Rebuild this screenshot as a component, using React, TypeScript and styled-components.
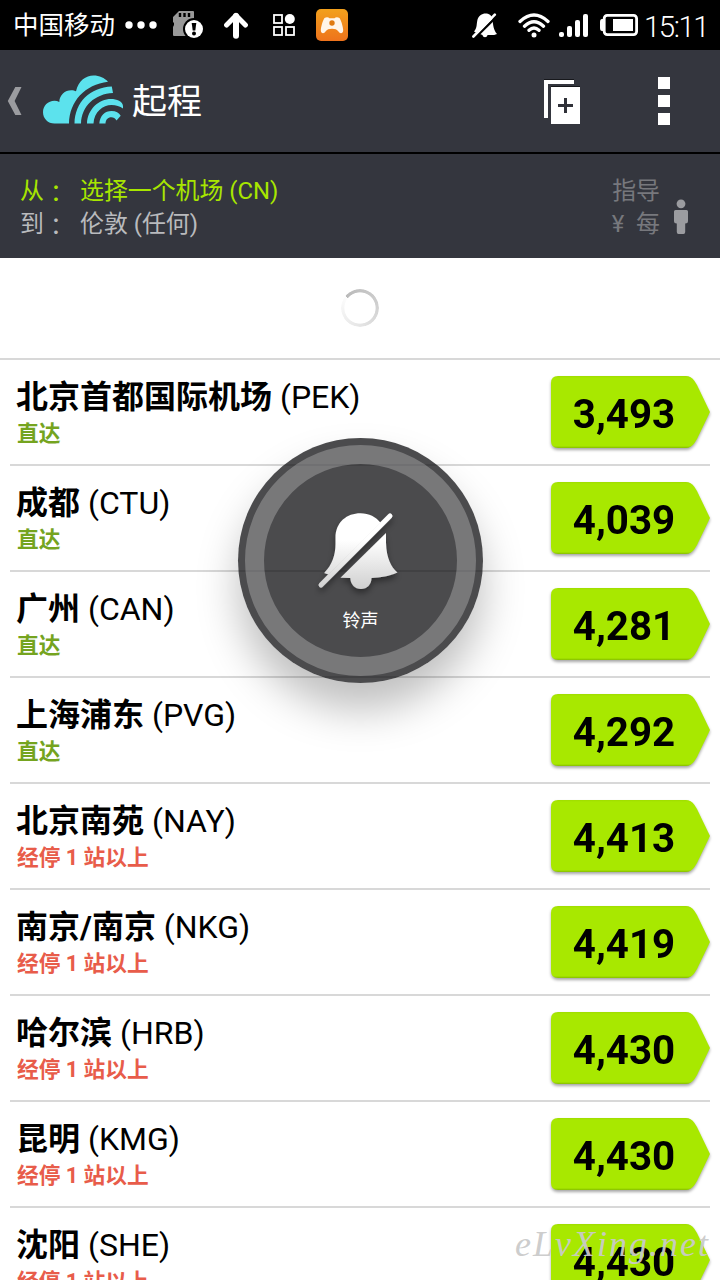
import React from 'react';
import styled, { createGlobalStyle } from 'styled-components';

const GlobalStyle = createGlobalStyle`
  * { box-sizing: border-box; }
  html, body { margin: 0; padding: 0; background: #fff; }
  body { font-family: Roboto, 'Noto Sans CJK SC', sans-serif; overflow: hidden; }
  svg { display: block; flex: none; }
`;

const Screen = styled.div`
  position: relative;
  width: 720px;
  height: 1280px;
  overflow: hidden;
  display: flex;
  flex-direction: column;
  background: #fff;
`;

const StatusBar = styled.header`
  flex: none;
  height: 50px;
  background: #000;
  color: #fff;
  display: flex;
  align-items: center;
  padding: 0 12px 0 13px;
`;

const Carrier = styled.span`
  font-size: 25.5px;
  line-height: 50px;
  width: 110px;
  white-space: nowrap;
`;

const StatusIcon = styled.span<{ $gap: number }>`
  margin-left: ${(p) => p.$gap}px;
`;

const Spacer = styled.div`
  flex: 1;
`;

const Clock = styled.span`
  font-size: 29.5px;
  font-weight: 300;
  line-height: 46px;
  width: 64px;
  margin-left: 6px;
  padding-top: 4px;
  letter-spacing: -1.5px;
  white-space: nowrap;
`;

const ActionBar = styled.nav`
  flex: none;
  height: 104px;
  background: #34363e;
  border-bottom: 2px solid #000;
  display: flex;
  align-items: center;
  padding: 0 50px 0 7px;
`;

const Logo = styled.div`
  margin: 0 0 4px 21px;
`;

const Title = styled.h1`
  margin: 4px 0 0 8px;
  color: #fff;
  font-size: 35px;
  font-weight: 400;
  line-height: 50px;
`;

const MenuButton = styled.div`
  display: flex;
  flex-direction: column;
  gap: 6px;
  margin-left: 78px;
`;

const MenuDot = styled.i`
  width: 12px;
  height: 12px;
  background: #fff;
`;

const Summary = styled.section`
  flex: none;
  height: 104px;
  background: #34363e;
  display: flex;
  padding: 21px 31px 0 20px;
  font-size: 23.9px;
  line-height: 33px;
`;

const Route = styled.div`
  flex: 1;
`;

const RouteLine = styled.div<{ $active?: boolean }>`
  display: flex;
  height: 33px;
  color: ${(p) => (p.$active ? '#a8e600' : '#b9babd')};
`;

const RouteLabel = styled.span`
  display: flex;
  width: 60px;
  white-space: nowrap;
`;

const Colon = styled.span`
  font-family: 'Noto Sans CJK TC', sans-serif;
`;

const PriceNote = styled.div`
  color: #77787d;
  text-align: right;
  margin-right: 13px;
`;

const Person = styled.div`
  padding-top: 24px;
`;

const Loading = styled.div`
  flex: none;
  height: 102px;
  border-bottom: 2px solid #d8d8d8;
  display: flex;
  align-items: center;
  justify-content: center;
`;

const Spinner = styled.div`
  width: 38px;
  height: 38px;
  border-radius: 50%;
  background: conic-gradient(from -50deg, #bababa, #cfcfcf 35%, #e6e6e6 65%, #fdfdfd);
  mask: radial-gradient(circle, transparent 15.2px, #000 16px);
`;

const List = styled.ul`
  list-style: none;
  margin: 0;
  padding: 0 10px;
`;

const Row = styled.li`
  height: 106px;
  border-bottom: 2px solid #d8d8d8;
  display: flex;
  justify-content: space-between;
  padding: 16px 0 0 6px;
`;

const Place = styled.div`
  padding-top: 1px;
`;

const Airport = styled.div`
  font-size: 32px;
  line-height: 40px;
  color: #000;
  white-space: nowrap;
`;

const City = styled.b`
  font-weight: 700;
`;

const Stops = styled.div<{ $direct: boolean }>`
  padding: 1px 0 0 1px;
  font-size: 21.7px;
  font-weight: 700;
  line-height: 32px;
  color: ${(p) => (p.$direct ? '#75a41f' : '#e85c4a')};
`;

const PriceTag = styled.div`
  position: relative;
  width: 159px;
  height: 72px;
  padding-right: 13px;
  text-align: center;
  font-size: 40.3px;
  font-weight: 700;
  line-height: 78px;
  color: #000;
  filter: drop-shadow(0 2px 1.5px rgba(0, 0, 0, 0.35));

  &::before {
    content: '';
    position: absolute;
    inset: 0;
    z-index: -1;
    background: linear-gradient(#9fdc00, #a8e800 2px, #a8e800 70px, #85bd00);
    clip-path: path('M7 0H135Q140 0 143.5 5L146 9L159 36L146 63L143.5 67Q140 72 135 72H7Q0 72 0 65V7Q0 0 7 0Z');
  }
`;

const Toast = styled.div`
  position: absolute;
  left: 238px;
  top: 438px;
  width: 245px;
  height: 245px;
  border-radius: 50%;
  background: rgba(15, 15, 17, 0.75);
  box-shadow: 0 27px 42px rgba(0, 0, 0, 0.25);
  display: flex;
  padding: 7px;
`;

const Ring = styled.div`
  flex: 1;
  border-radius: 50%;
  border: 19px solid rgba(255, 255, 255, 0.25);
  display: flex;
  flex-direction: column;
  align-items: center;
  padding-top: 44px;
  color: #fff;
  font-size: 18px;
  line-height: 24px;
`;

const ToastLabel = styled.span`
  margin-top: 7px;
`;

const Watermark = styled.div`
  position: absolute;
  left: 515px;
  top: 1222px;
  font-family: 'Liberation Serif', serif;
  font-style: italic;
  font-size: 36px;
  line-height: 44px;
  letter-spacing: 2px;
  color: rgba(202, 202, 202, 0.95);
  white-space: nowrap;
`;

const airports = [
  { city: '北京首都国际机场', code: 'PEK', direct: true, price: '3,493' },
  { city: '成都', code: 'CTU', direct: true, price: '4,039' },
  { city: '广州', code: 'CAN', direct: true, price: '4,281' },
  { city: '上海浦东', code: 'PVG', direct: true, price: '4,292' },
  { city: '北京南苑', code: 'NAY', direct: false, price: '4,413' },
  { city: '南京/南京', code: 'NKG', direct: false, price: '4,419' },
  { city: '哈尔滨', code: 'HRB', direct: false, price: '4,430' },
  { city: '昆明', code: 'KMG', direct: false, price: '4,430' },
  { city: '沈阳', code: 'SHE', direct: false, price: '4,430' },
];

const DotsIcon = () => (
  <svg width="32" height="8" viewBox="0 0 32 8" fill="#fff">
    <circle cx="4" cy="4" r="3.7" />
    <circle cx="16" cy="4" r="3.7" />
    <circle cx="28" cy="4" r="3.7" />
  </svg>
);

const SdCardIcon = () => (
  <svg width="31" height="28" viewBox="0 0 31 28">
    <path d="M6 0H20Q21 0 21 1V25H1Q0 25 0 24V16L1 14V12L0 11V6Z" fill="#999" />
    <path d="M7 2V6M11.5 2V6M16 2V6" stroke="#000" strokeWidth="2.4" />
    <circle cx="21" cy="18" r="11" fill="#000" />
    <circle cx="21" cy="18" r="9" fill="#fff" />
    <path d="M18.7 12H23.3L22.3 19.5H19.7Z" fill="#000" />
    <circle cx="21" cy="22.5" r="2" fill="#000" />
  </svg>
);

const UpArrowIcon = () => (
  <svg width="24" height="27" viewBox="0 0 24 27" fill="none" stroke="#fff" strokeLinecap="round" strokeLinejoin="round">
    <path d="M12 4V23.7" strokeWidth="6" />
    <path d="M2.6 13L12 3.4L21.4 13" strokeWidth="5" />
  </svg>
);

const AppsIcon = () => (
  <svg width="22" height="22" viewBox="0 0 22 22" fill="none" stroke="#fff" strokeWidth="1.8">
    <rect x="1" y="1" width="8" height="8" />
    <rect x="1" y="13" width="8" height="8" />
    <rect x="13" y="13" width="8" height="8" />
    <circle cx="16.8" cy="5" r="5" fill="#fff" stroke="none" />
  </svg>
);

const GameIcon = () => (
  <svg width="32" height="32" viewBox="0 0 32 32">
    <defs>
      <linearGradient id="game" x1="0" y1="0" x2="0" y2="1">
        <stop offset="0" stopColor="#f2a01c" />
        <stop offset="1" stopColor="#ee731c" />
      </linearGradient>
    </defs>
    <rect width="32" height="32" rx="5" fill="url(#game)" />
    <path d="M8.5 9C10.5 7.8 12.5 8.2 13.5 9.2H18.5C19.5 8.2 21.5 7.8 23.5 9C25.5 12 27 18 27.2 21C27.2 24.8 24 25 22.5 22.6C21 20.4 19 19.8 16 19.8S11 20.4 9.5 22.6C8 25 4.8 24.8 4.8 21C5 18 6.5 12 8.5 9Z" fill="#fff5ea" />
    <circle cx="16" cy="14" r="2.7" fill="#df7a12" />
  </svg>
);

const MutedIcon = () => (
  <svg width="26" height="25" viewBox="0 0 26 25">
    <path d="M2 18.5C5 15 4.5 12 5.2 8C6.2 2.5 10 .5 13.5 .5C17 .5 19.5 2 20.5 6C21 12 21.5 17 25 21C22 22.5 18 22 15.5 22C15 25 11 25 10.5 22L3 19Z" fill="#fff" />
    <path d="M3 25L25.5 2.5" stroke="#000" strokeWidth="2.4" />
    <path d="M1.4 23.5L22.8 1.7" stroke="#fff" strokeWidth="2.6" strokeLinecap="round" />
  </svg>
);

const WifiIcon = () => (
  <svg width="32" height="25" viewBox="0 0 32 25" fill="none" stroke="#fff" strokeWidth="3.3" strokeLinecap="round">
    <path d="M2 8.5Q16-4.5 30 8.5M6.5 13.2Q16 4.2 25.5 13.2M11 17.3Q16 12.8 21 17.3" />
    <circle cx="16" cy="22" r="2.5" fill="#fff" stroke="none" />
  </svg>
);

const SignalIcon = () => (
  <svg width="29" height="23" viewBox="0 0 29 23" fill="#fff">
    <rect x="0" y="18" width="5" height="5" rx="2" />
    <rect x="8" y="12" width="5" height="11" rx="2" />
    <rect x="16" y="6" width="5" height="17" rx="2" />
    <rect x="24" y="0" width="5" height="23" rx="2" />
  </svg>
);

const BatteryIcon = () => (
  <svg width="38" height="22" viewBox="0 0 38 22">
    <rect x="4.2" y="1.4" width="32.4" height="19.2" rx="3" fill="none" stroke="#fff" strokeWidth="2.8" />
    <path d="M4 5H2Q0 5 0 8V14Q0 17 2 17H4Z" fill="#fff" />
    <rect x="13" y="5" width="20" height="12" fill="#fff" />
  </svg>
);

const BackIcon = () => (
  <svg width="15" height="28" viewBox="0 0 15 28">
    <path d="M8.3 0H14.5L7.6 14L14.5 28H8.3L.8 14Z" fill="#9b9ca0" />
  </svg>
);

const CloudIcon = () => (
  <svg width="81" height="49" viewBox="0 0 81 49">
    <path d="M26 48.5H11.5C5 48.5 0 43.5 0 37.2S5 25.8 11.5 25.8C13.2 25.8 14.8 26.2 16.3 26.9C16.5 20 22 15.3 28.2 15.3C30.2 15.3 31.8 15.8 33 16.3C35.5 5.5 43 .5 50.5 .5C56.5 .5 61.5 3 65 6.7C42 9.5 26.5 26 26 48.5Z" fill="#5ce2ed" />
    <path d="M31.5 48.5C32 27 47 12.5 68.8 11.5L70 18C52 18.8 38.5 31 38 48.5Z" fill="#5ce2ed" />
    <path d="M44 48.5C44.5 34 56 24 68 24C73.5 24 80 26.5 80 31V33.5C77 31.5 73 30 68.5 30C60 30 51 37 50.5 48.5Z" fill="#5ce2ed" />
    <path d="M56.3 48.5C57 40.5 62 36 68.5 36C73 36 76 38 77.7 40.7L73.5 45.5C72.2 43.2 70.5 42.2 68.3 42.2C65 42.2 62.6 44.5 62.5 48.5Z" fill="#5ce2ed" />
  </svg>
);

const AddPageIcon = () => (
  <svg width="36" height="45" viewBox="0 0 36 45">
    <path d="M0 0H30V5H4V39H0Z" fill="#fff" />
    <path d="M0 .5H30M7 7.5H36" stroke="#17181c" />
    <rect x="7" y="8" width="29" height="37" fill="#fff" />
    <path d="M14 26.5H29M21.5 19V34" stroke="#303139" strokeWidth="3" />
  </svg>
);

const PersonIcon = () => (
  <svg width="16" height="36" viewBox="0 0 16 36" fill="#9b9ca0">
    <circle cx="8" cy="4.8" r="4.4" />
    <path d="M2.5 11H13.5Q15 11 15 12.5V22Q15 24.5 12.2 24.5V33Q12.2 35 10.5 35H5.5Q3.8 35 3.8 33V24.5Q1 24.5 1 22V12.5Q1 11 2.5 11Z" />
  </svg>
);

const MutedBellIcon = () => (
  <svg width="94" height="94" viewBox="0 0 94 94">
    <defs>
      <linearGradient id="bell" gradientUnits="userSpaceOnUse" x1="0" y1="5" x2="0" y2="82">
        <stop offset="0" stopColor="#fff" />
        <stop offset=".35" stopColor="#fff" />
        <stop offset="1" stopColor="#cfcfcf" />
      </linearGradient>
      <filter id="bellShadow" x="-20%" y="-20%" width="140%" height="150%">
        <feDropShadow dx="0" dy="4" stdDeviation="3" floodColor="#000" floodOpacity=".4" />
      </filter>
    </defs>
    <g fill="url(#bell)" filter="url(#bellShadow)">
      <path d="M10.5 64.5C18 57 21.5 47 21.5 36V30C21.5 14 33 5.3 46.5 5.3C55 5.3 62 9 66.5 14.8L14.5 66.6L10.5 65.2Z" />
      <path d="M72 25V35C72.5 50 77 59 83.5 64.5C76 68 66 69.5 57.5 70C57.5 76.5 53 81 47 81S36.5 76.5 36.3 70L26.5 69.7Z" />
      <path d="M76 8L7 77" stroke="url(#bell)" strokeWidth="5" strokeLinecap="round" />
    </g>
  </svg>
);

export default function App() {
  return (
    <Screen>
      <GlobalStyle />
      <StatusBar>
        <Carrier>中国移动</Carrier>
        <StatusIcon $gap={2}><DotsIcon /></StatusIcon>
        <StatusIcon $gap={16}><SdCardIcon /></StatusIcon>
        <StatusIcon $gap={20}><UpArrowIcon /></StatusIcon>
        <StatusIcon $gap={25}><AppsIcon /></StatusIcon>
        <StatusIcon $gap={21}><GameIcon /></StatusIcon>
        <Spacer />
        <StatusIcon $gap={0}><MutedIcon /></StatusIcon>
        <StatusIcon $gap={20}><WifiIcon /></StatusIcon>
        <StatusIcon $gap={9}><SignalIcon /></StatusIcon>
        <StatusIcon $gap={12}><BatteryIcon /></StatusIcon>
        <Clock>15:11</Clock>
      </StatusBar>
      <ActionBar>
        <BackIcon />
        <Logo><CloudIcon /></Logo>
        <Title>起程</Title>
        <Spacer />
        <AddPageIcon />
        <MenuButton>
          <MenuDot />
          <MenuDot />
          <MenuDot />
        </MenuButton>
      </ActionBar>
      <Summary>
        <Route>
          <RouteLine $active><RouteLabel>从<Colon>：</Colon></RouteLabel>选择一个机场 (CN)</RouteLine>
          <RouteLine><RouteLabel>到<Colon>：</Colon></RouteLabel>伦敦 (任何)</RouteLine>
        </Route>
        <PriceNote>
          <div>指导</div>
          <div>¥&nbsp; 每</div>
        </PriceNote>
        <Person><PersonIcon /></Person>
      </Summary>
      <Loading><Spinner /></Loading>
      <List>
        {airports.map((a) => (
          <Row key={a.code}>
            <Place>
              <Airport><City>{a.city}</City> ({a.code})</Airport>
              <Stops $direct={a.direct}>{a.direct ? '直达' : '经停 1 站以上'}</Stops>
            </Place>
            <PriceTag>{a.price}</PriceTag>
          </Row>
        ))}
      </List>
      <Toast>
        <Ring>
          <MutedBellIcon />
          <ToastLabel>铃声</ToastLabel>
        </Ring>
      </Toast>
      <Watermark>eLvXing.net</Watermark>
    </Screen>
  );
}
